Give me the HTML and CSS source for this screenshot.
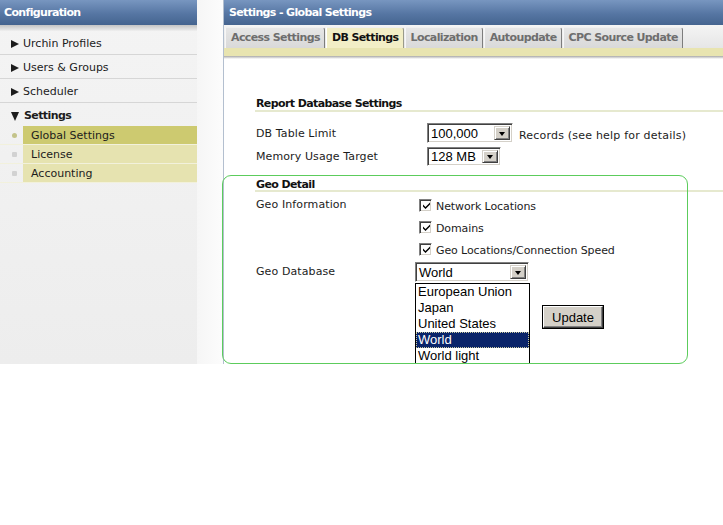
FILE: index.html
```html
<!DOCTYPE html>
<html>
<head>
<meta charset="utf-8">
<title>Settings - Global Settings</title>
<link rel="stylesheet" href="styles.css">
</head>
<body>
<div class="frame">
  <aside class="sidebar">
    <div class="side-head">Configuration</div>
    <ul class="menu">
      <li class="menu-item"><span class="tri-right"></span>Urchin Profiles</li>
      <li class="menu-item"><span class="tri-right"></span>Users &amp; Groups</li>
      <li class="menu-item"><span class="tri-right"></span>Scheduler</li>
      <li class="menu-item open"><span class="tri-down"></span>Settings</li>
    </ul>
    <ul class="sub">
      <li class="sub-item active"><span class="dot"></span><span class="sub-label">Global Settings</span></li>
      <li class="sub-item"><span class="dot"></span><span class="sub-label">License</span></li>
      <li class="sub-item"><span class="dot"></span><span class="sub-label">Accounting</span></li>
    </ul>
  </aside>
  <div class="gutter"></div>
  <main class="panel">
    <div class="panel-head">Settings - Global Settings</div>
    <div class="tabs">
      <div class="tab">Access Settings</div>
      <div class="tab active">DB Settings</div>
      <div class="tab">Localization</div>
      <div class="tab">Autoupdate</div>
      <div class="tab">CPC Source Update</div>
    </div>
    <div class="tab-bar"></div>
    <div class="tab-shadow"></div>
    <div class="content">
      <h3 class="group-title">Report Database Settings</h3>
      <div class="form report">
        <div class="label">DB Table Limit</div>
        <div class="field">
          <div class="select w-limit"><span class="val">100,000</span><span class="arrow"><span class="arrow-tri"></span></span></div>
          <span class="note">Records (see help for details)</span>
        </div>
        <div class="label">Memory Usage Target</div>
        <div class="field">
          <div class="select w-mem"><span class="val">128 MB</span><span class="arrow"><span class="arrow-tri"></span></span></div>
        </div>
      </div>

      <h3 class="group-title geo-title">Geo Detail</h3>
      <div class="form geo">
        <div class="label first">Geo Information</div>
        <div class="checks">
          <label class="check"><span class="cb"><svg width="9" height="9" viewBox="0 0 9 9"><path d="M1 3.5 L3.5 6 L8 1.5 L8 3.5 L3.5 8 L1 5.5 Z" fill="#000"/></svg></span>Network Locations</label>
          <label class="check"><span class="cb"><svg width="9" height="9" viewBox="0 0 9 9"><path d="M1 3.5 L3.5 6 L8 1.5 L8 3.5 L3.5 8 L1 5.5 Z" fill="#000"/></svg></span>Domains</label>
          <label class="check"><span class="cb"><svg width="9" height="9" viewBox="0 0 9 9"><path d="M1 3.5 L3.5 6 L8 1.5 L8 3.5 L3.5 8 L1 5.5 Z" fill="#000"/></svg></span>Geo Locations/Connection Speed</label>
        </div>
        <div class="label db-label">Geo Database</div>
        <div class="field db-field">
          <div class="select w-geo"><span class="val">World</span><span class="arrow"><span class="arrow-tri"></span></span></div>
          <ul class="dropdown">
            <li class="opt">European Union</li>
            <li class="opt">Japan</li>
            <li class="opt">United States</li>
            <li class="opt selected">World</li>
            <li class="opt">World light</li>
          </ul>
        </div>
      </div>
      <div class="actions">
        <button class="btn" type="button">Update</button>
      </div>
    </div>
  </main>
  <div class="highlight"></div>
</div>
</body>
</html>
```

FILE: styles.css
```css
* { box-sizing: border-box; }
html, body { margin: 0; padding: 0; background: #fff; }
body {
  font-family: "DejaVu Sans", Verdana, sans-serif;
  font-size: 11px;
  color: #1c1c1c;
}
ul { list-style: none; margin: 0; padding: 0; }
h3 { margin: 0; }

.frame {
  position: relative;
  display: flex;
  width: 723px;
  height: 364px;
  overflow: hidden;
}

/* ---------- sidebar ---------- */
.sidebar {
  width: 197px;
  flex: none;
  background: linear-gradient(#f4f4f4, #ededed);
}
.side-head {
  height: 25px;
  line-height: 25px;
  padding-left: 4px;
  font-weight: bold;
  letter-spacing: -0.65px;
  color: #fff;
  background: linear-gradient(#7896c0, #5676a3 55%, #45648f);
}
.menu {
  padding-top: 6px;
  background: linear-gradient(#c4c4c4, #efefef 6px, transparent 6px);
}
.menu-item {
  display: flex;
  align-items: center;
  height: 24px;
  padding: 6px 0 3px 11px;
  line-height: 14px;
  border-bottom: 1px solid #d6d6d6;
}
.menu-item.open {
  font-weight: bold;
  letter-spacing: -0.6px;
  border-bottom: none;
  height: 23px;
}
.tri-right {
  width: 0; height: 0;
  border-left: 8px solid #1c1c1c;
  border-top: 4.5px solid transparent;
  border-bottom: 4.5px solid transparent;
  margin-right: 4px;
}
.tri-down {
  width: 0; height: 0;
  border-top: 9px solid #1c1c1c;
  border-left: 4px solid transparent;
  border-right: 4px solid transparent;
  margin-right: 5px;
}
.sub-item {
  display: flex;
  align-items: center;
  height: 19px;
  border-bottom: 1px solid #f2f1dc;
}
.dot {
  width: 5px; height: 5px;
  margin: 0 6px 0 12px;
  border-radius: 1px;
  background: #d2d2d2;
}
.sub-item.active .dot { background: #c3c38a; border-radius: 50%; }
.sub-label {
  flex: 1;
  align-self: stretch;
  display: flex;
  align-items: center;
  padding: 1px 0 0 8px;
  background: #e6e3b0;
}
.sub-item.active .sub-label { background: #cdca70; }

/* ---------- gutter ---------- */
.gutter {
  width: 26px;
  flex: none;
  background: linear-gradient(90deg, #f6f6f6, #fcfcfc);
}

/* ---------- panel ---------- */
.panel {
  flex: 1;
  display: flex;
  flex-direction: column;
  border-left: 1px solid #b3bfcf;
  background: #fff;
  min-width: 0;
}
.panel-head {
  height: 25px;
  line-height: 26px;
  padding-left: 5px;
  font-weight: bold;
  letter-spacing: -0.65px;
  color: #fff;
  background: linear-gradient(#7896c0, #5676a3 55%, #45648f);
}
.tabs {
  display: flex;
  height: 23px;
  padding: 2px 0 0 1px;
  background: linear-gradient(#f4f4f4, #e6e6e6);
}
.tab {
  height: 21px;
  line-height: 20px;
  padding: 0 4px 0 5px;
  margin-right: 1px;
  font-weight: bold;
  letter-spacing: -0.6px;
  color: #6e6e6e;
  background: linear-gradient(#e6e6e6, #d9d9d9);
  border-left: 1px solid #f6f6f6;
  border-top: 1px solid #f0f0f0;
  border-right: 1px solid #7d7d7d;
  border-top-right-radius: 3px;
  white-space: nowrap;
}
.tab.active {
  color: #111;
  background: #f2eec6;
  border-left-color: #fff;
  border-right-color: #9a9a8a;
}
.tab-bar {
  height: 8px;
  background: #e8e4b0;
}
.tab-shadow {
  height: 3px;
  background: linear-gradient(#a8a8a8, #fff);
}

.content {
  padding: 37px 0 0 32px;
}
.group-title {
  font-size: 11px;
  font-weight: bold;
  letter-spacing: -0.6px;
  line-height: 14px;
  height: 16px;
  margin-left: -1px;
  padding: 1px 0 0 1px;
  border-bottom: 2px solid #e6e9cf;
  color: #111;
}
.form {
  display: grid;
  align-items: center;
}
.label { letter-spacing: 0.1px; }
.report {
  grid-template-columns: 171px auto;
  row-gap: 4px;
  margin-top: 11px;
}
.field {
  display: flex;
  align-items: center;
}
.note {
  margin-left: 6px;
  padding-top: 5px;
  letter-spacing: 0.2px;
}

.geo-title { margin-top: 10px; padding-top: 2px; }
.geo {
  grid-template-columns: 159px auto;
  margin-top: 7px;
  align-items: start;
}
.label.first { margin-top: -1px; }
.checks {
  display: flex;
  flex-direction: column;
  gap: 9px;
  padding-left: 4px;
}
.check {
  display: flex;
  align-items: flex-start;
  height: 13px;
  line-height: 16px;
  letter-spacing: -0.1px;
}
.check .cb { margin-right: 4px; }
.cb {
  flex: none;
  width: 13px; height: 13px;
  display: flex;
  align-items: center;
  justify-content: center;
  background: #fff;
  border: 1px solid;
  border-color: #808080 #fff #fff #808080;
  box-shadow: inset 1px 1px #404040, inset -1px -1px #d4d0c8;
}
.cb svg { display: block; margin: 0 0 0 1px; }
.db-label { margin-top: 9px; }
.db-field {
  margin-top: 6px;
  position: relative;
}

/* ---------- select controls ---------- */
.select {
  display: flex;
  align-items: center;
  height: 20px;
  background: #fff;
  border: 1px solid;
  border-color: #808080 #fff #fff #808080;
  box-shadow: inset 1px 1px #404040, inset -1px -1px #d4d0c8;
  padding: 2px;
  font-family: "Liberation Sans", Arial, sans-serif;
  font-size: 13px;
  color: #000;
}
.w-limit { width: 86px; }
.w-mem { width: 74px; height: 19px; }
.w-geo { width: 114px; }
.val { flex: 1; padding-left: 1px; line-height: 15px; white-space: nowrap; }
.arrow {
  width: 16px;
  align-self: stretch;
  display: flex;
  align-items: center;
  justify-content: center;
  background: #d4d0c8;
  border: 1px solid;
  border-color: #d4d0c8 #404040 #404040 #d4d0c8;
  box-shadow: inset 1px 1px #fff, inset -1px -1px #808080;
}
.arrow-tri {
  width: 0; height: 0;
  border-top: 4px solid #000;
  border-left: 3.5px solid transparent;
  border-right: 3.5px solid transparent;
  margin-top: 1px;
}

.dropdown {
  position: absolute;
  left: 0;
  top: 21px;
  width: 115px;
  background: #fff;
  border: 1px solid #000;
  font-family: "Liberation Sans", Arial, sans-serif;
  font-size: 13px;
  color: #000;
  z-index: 2;
}
.opt {
  height: 16px;
  line-height: 16px;
  padding-left: 2px;
  white-space: nowrap;
}
.opt.selected {
  background: #0a246a;
  color: #fff;
  outline: 1px dotted #c9c9a0;
  outline-offset: -1px;
}

.actions {
  margin: 24px 0 0 287px;
}
.btn {
  display: block;
  width: 60px;
  height: 22px;
  padding: 0;
  font-family: "Liberation Sans", Arial, sans-serif;
  font-size: 13px;
  color: #000;
  background: #d4d0c8;
  border: 1px solid;
  border-color: #fff #404040 #404040 #fff;
  box-shadow: 0 0 0 1px #000, inset -1px -1px #808080;
}

/* annotation overlay */
.highlight {
  position: absolute;
  left: 222px;
  top: 175px;
  width: 466px;
  height: 189px;
  border: 1px solid #5ccc5c;
  border-radius: 9px;
  pointer-events: none;
  z-index: 3;
}
```
